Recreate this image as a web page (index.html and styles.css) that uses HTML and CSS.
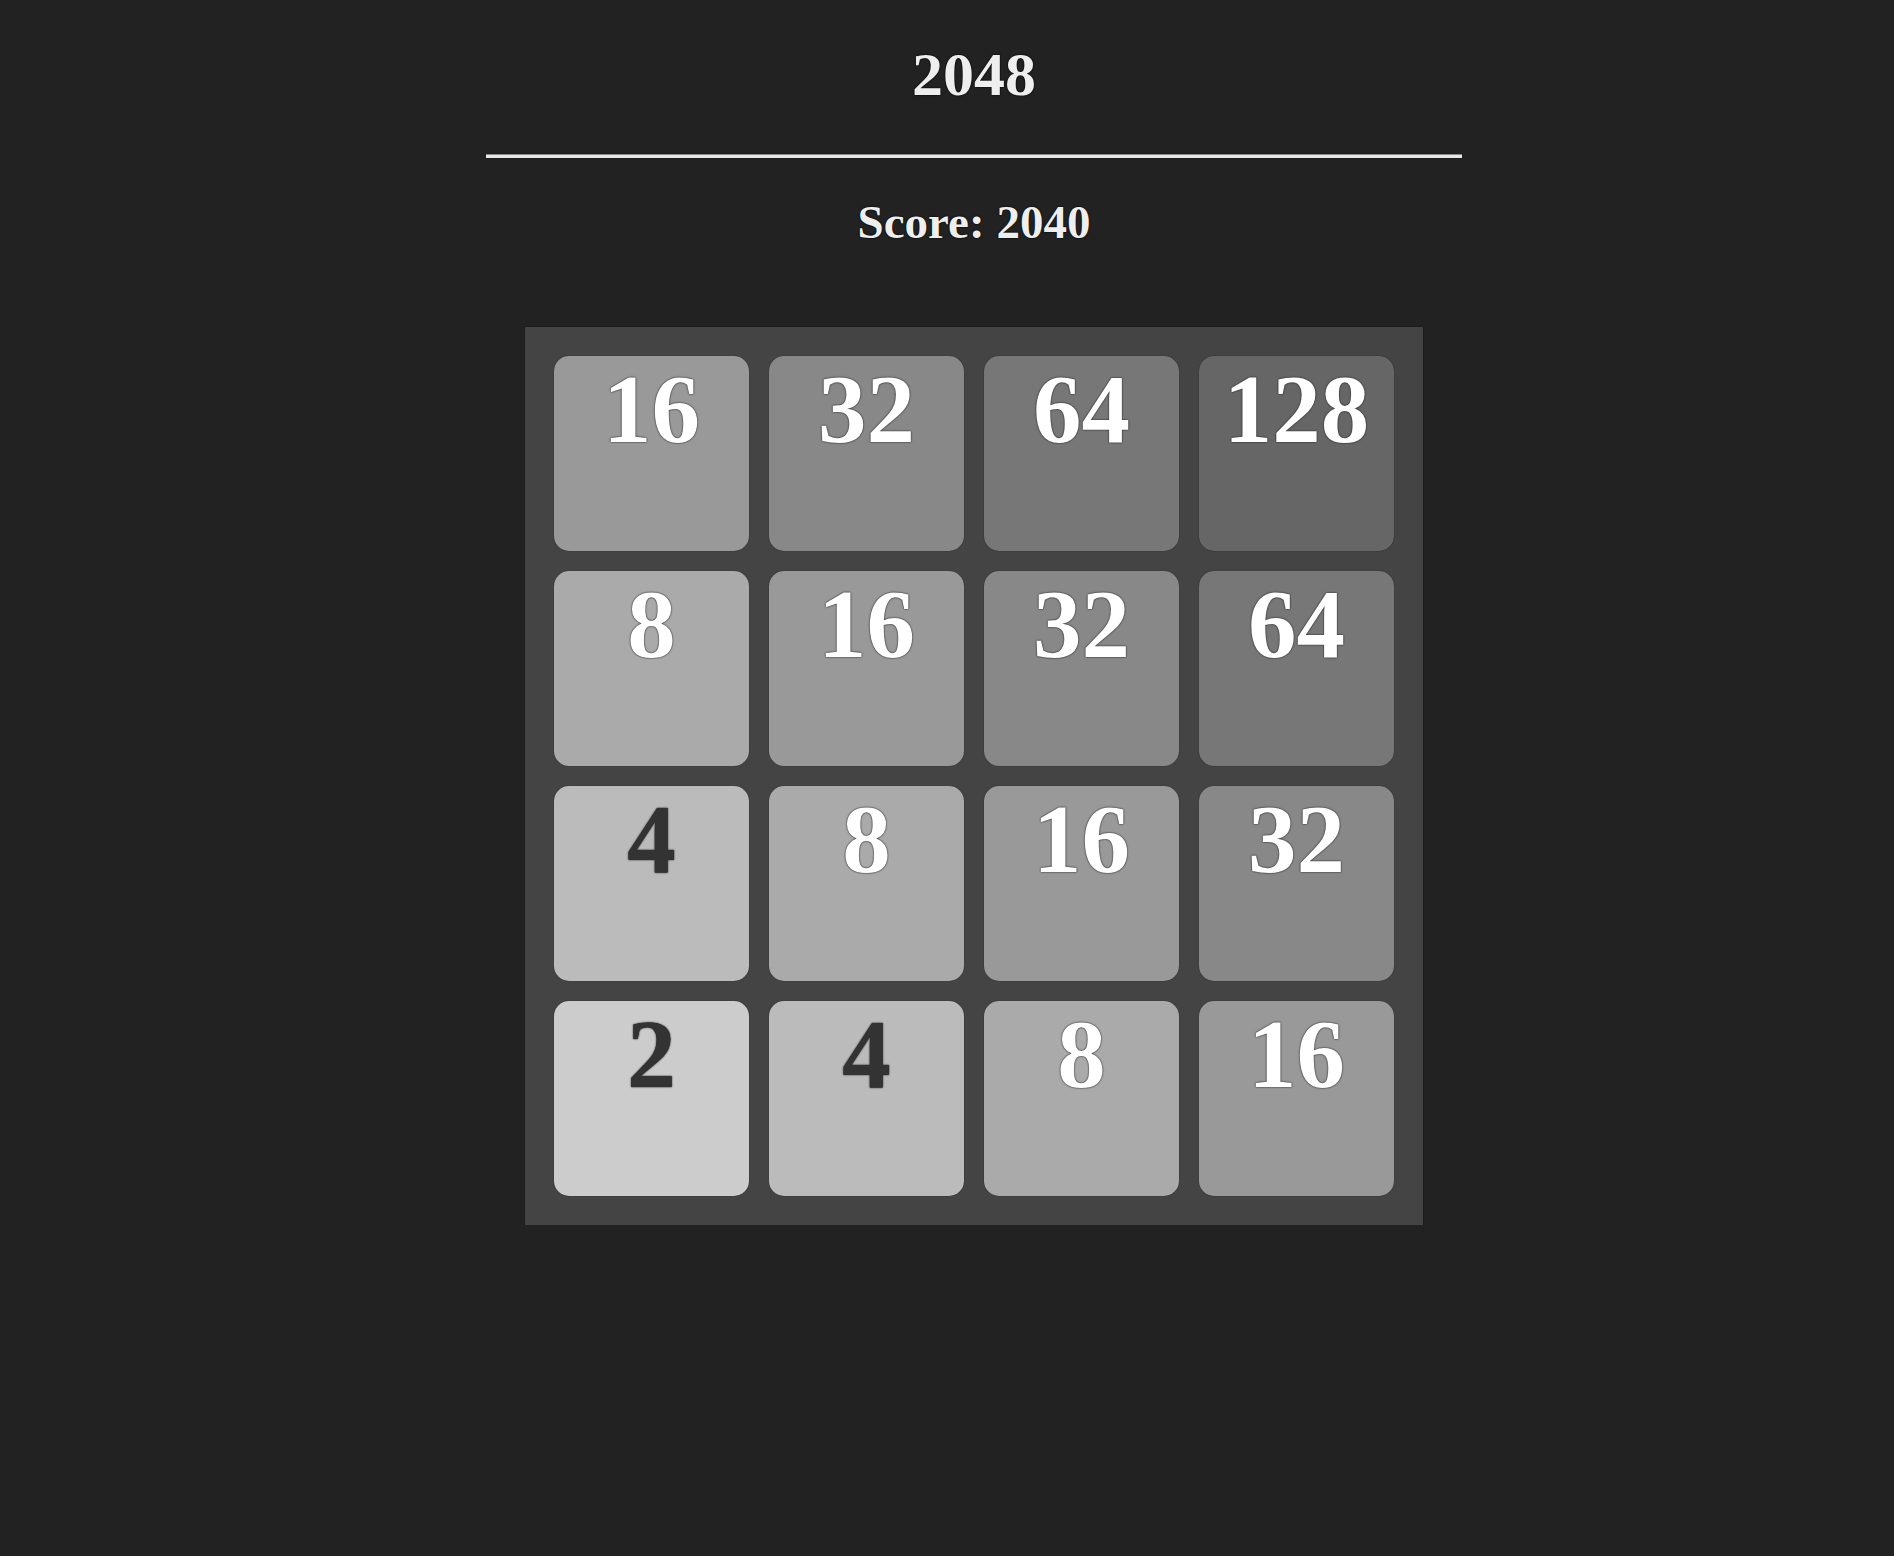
FILE: index.html
```html
<!DOCTYPE html>
<html lang="en">
<head>
<meta charset="utf-8">
<title>2048</title>
<link rel="stylesheet" href="styles.css">
</head>
<body>
<main class="page">
  <h1 class="title">2048</h1>
  <hr class="divider">
  <h2 class="score">Score: 2040</h2>
  <div class="board">
    <div class="tile t16">16</div>
    <div class="tile t32">32</div>
    <div class="tile t64">64</div>
    <div class="tile t128">128</div>
    <div class="tile t8">8</div>
    <div class="tile t16">16</div>
    <div class="tile t32">32</div>
    <div class="tile t64">64</div>
    <div class="tile t4">4</div>
    <div class="tile t8">8</div>
    <div class="tile t16">16</div>
    <div class="tile t32">32</div>
    <div class="tile t2">2</div>
    <div class="tile t4">4</div>
    <div class="tile t8">8</div>
    <div class="tile t16">16</div>
  </div>
</main>
</body>
</html>
```
FILE: styles.css
```css
html, body {
  margin: 0;
  background: #222222;
}
body {
  padding: 39px 0 0 54px;
  font-family: "Liberation Serif", "Times New Roman", serif;
  color: #eeeeee;
}
.page {
  width: 976px;
  margin: 0 auto;
  display: flex;
  flex-direction: column;
  align-items: center;
}
.title {
  margin: 0;
  font-size: 62px;
  line-height: 71px;
  font-weight: bold;
  text-shadow: 0 0 2px #000, 0 0 1px #000;
}
.divider {
  align-self: stretch;
  margin: 44px 0 0;
  height: 3px;
  border: none;
  border-top: 1px solid #8a8a8a;
  background: #e8e8e8;
  box-shadow: 0 0 1px #000;
}
.score {
  margin: 37px 0 0;
  font-size: 47px;
  line-height: 54px;
  font-weight: bold;
  text-shadow: 0 0 2px #000, 0 0 1px #000;
}
.board {
  margin-top: 78px;
  background: #444444;
  padding: 29px;
  display: grid;
  grid-template-columns: repeat(4, 195px);
  grid-auto-rows: 195px;
  gap: 20px;
  box-shadow: 0 0 1px #000;
}
.tile {
  box-sizing: border-box;
  border-radius: 15px;
  padding-top: 5px;
  text-align: center;
  font-size: 97px;
  line-height: 97px;
  font-weight: bold;
  color: #ffffff;
  text-shadow: 0 0 2px #222, 0 0 1px #222;
  box-shadow: 0 0 1px rgba(0,0,0,0.7);
}
.t2 { background: #cccccc; color: #333333; }
.t4 { background: #bbbbbb; color: #333333; }
.t8 { background: #aaaaaa; }
.t16 { background: #999999; }
.t32 { background: #888888; }
.t64 { background: #777777; }
.t128 { background: #666666; }
```
